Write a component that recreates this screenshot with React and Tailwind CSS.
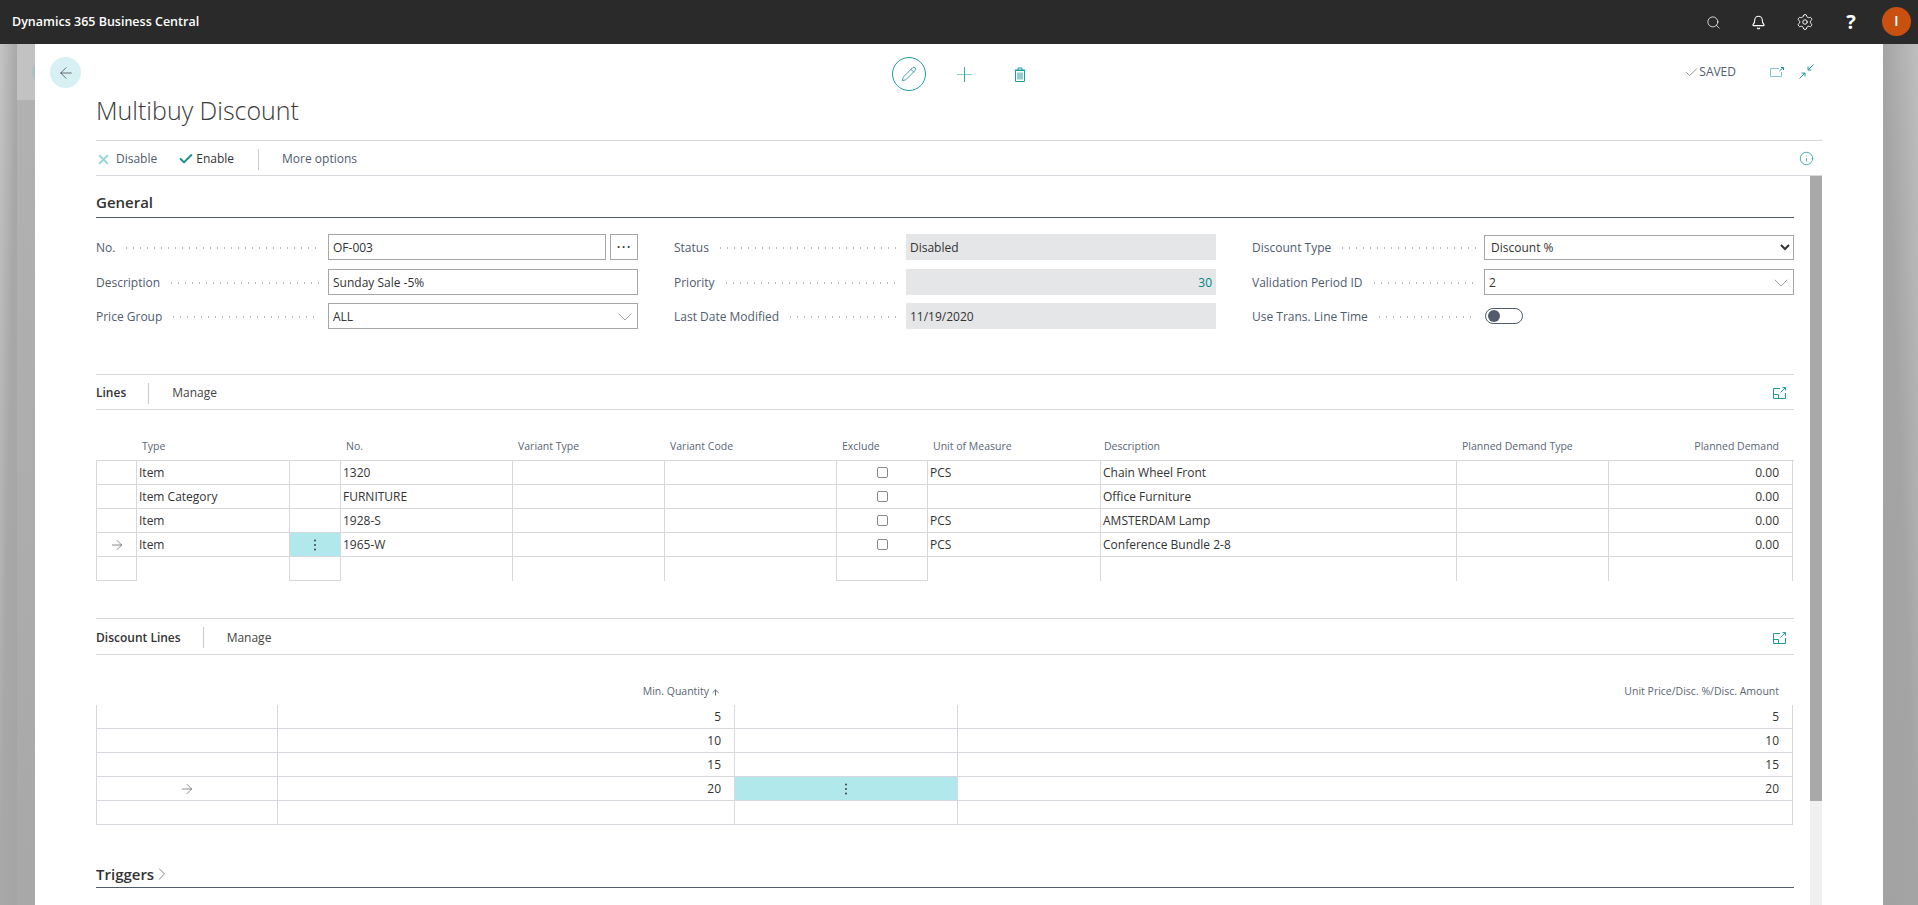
import { ArrowLeft, ArrowRight, ArrowUp, Bell, Check, ChevronDown, ChevronRight, Info, Pencil, Search, Settings, X } from 'lucide-react';

const lineCols = 'grid grid-cols-[40px_153px_51px_172px_152px_172px_91px_173px_356px_152px_185px]';
const discountCols = 'grid grid-cols-[181px_457px_223px_836px]';

const lines = [
  { type: 'Item', no: '1320', uom: 'PCS', desc: 'Chain Wheel Front' },
  { type: 'Item Category', no: 'FURNITURE', uom: '', desc: 'Office Furniture' },
  { type: 'Item', no: '1928-S', uom: 'PCS', desc: 'AMSTERDAM Lamp' },
  { type: 'Item', no: '1965-W', uom: 'PCS', desc: 'Conference Bundle 2-8', current: true },
];

const discounts = [
  { qty: '5', value: '5' },
  { qty: '10', value: '10' },
  { qty: '15', value: '15' },
  { qty: '20', value: '20', current: true },
];

function Kebab() {
  return (
    <svg width="4" height="12" viewBox="0 0 4 12" className="text-[#333]">
      <circle cx="2" cy="1.5" r="0.9" fill="currentColor" />
      <circle cx="2" cy="6" r="0.9" fill="currentColor" />
      <circle cx="2" cy="10.5" r="0.9" fill="currentColor" />
    </svg>
  );
}

function PlusIcon() {
  return (
    <svg width="15" height="15" viewBox="0 0 15 15" fill="none" strokeWidth="1">
      <path d="M0 7.5h15" stroke="#85ccd0" />
      <path d="M7.5 0v15" stroke="#3aa6ab" />
    </svg>
  );
}

function TrashIcon() {
  return (
    <svg width="12" height="15" viewBox="0 0 12 15" fill="none" stroke="#1f9aa0" strokeWidth="1">
      <path d="M0.5 3h11M4 3V1h4v2" />
      <path d="M1.5 3.5h9V14.5h-9z" />
      <path d="M4 5.5v7M6 5.5v7M8 5.5v7" />
    </svg>
  );
}

function OpenIcon() {
  return (
    <svg width="14" height="10" viewBox="0 0 14 10" fill="none" strokeWidth="1">
      <path d="M9 1.5H0.5v8h11V5" stroke="#7cc8cc" />
      <path d="M9.5 4L13 0.7M11 0.5h2.5V3" stroke="#1f8d93" />
    </svg>
  );
}

function CollapseIcon() {
  return (
    <svg width="15" height="15" viewBox="0 0 15 15" fill="none" stroke="#1f9aa0" strokeWidth="1">
      <path d="M14.5 0.5L9 6M9 2.5V6h3.5" />
      <path d="M0.5 14.5L6 9M2.5 9H6v3.5" />
    </svg>
  );
}

function ExpandListIcon() {
  return (
    <svg width="13" height="12" viewBox="0 0 13 12" fill="none" stroke="#1f9aa0" strokeWidth="1">
      <path d="M7 1.5H0.5v10h12V6" />
      <path d="M0.5 7.5h5v4" />
      <path d="M7.5 5.5L12 1M9.5 0.5h3V3.5" />
    </svg>
  );
}

function Field({ label, children }) {
  return (
    <div className="flex items-center h-[26px]">
      <div className="flex items-center w-[232px] pr-2 pt-0.5">
        <span className="text-xs text-[#505c6d] whitespace-nowrap">{label}</span>
        <span className="flex-1 ml-2 h-1 bg-[radial-gradient(circle,#b4b9c0_0.7px,transparent_1px)] bg-[length:7px_4px] bg-repeat-x" />
      </div>
      <div className="flex-1 h-full">{children}</div>
    </div>
  );
}

function TextBox({ children, className = '' }) {
  return (
    <div className={`h-full flex items-center px-1 pt-0.5 border border-[#a6a6a6] text-xs text-[#333] ${className}`}>
      {children}
    </div>
  );
}

function ReadOnlyBox({ children, right }) {
  return (
    <div className={`h-full flex items-center px-1 pt-0.5 bg-[#e5e6e8] text-xs ${right ? 'justify-end text-[#00838a]' : 'text-[#333]'}`}>
      {children}
    </div>
  );
}

function LookupBox({ children }) {
  return (
    <TextBox className="justify-between pr-0">
      {children}
      <ChevronDown size={24} strokeWidth={0.7} className="text-[#777] -my-1" />
    </TextBox>
  );
}

function PartHeader({ title, height }) {
  return (
    <div className={`flex items-center pt-0.5 border-y border-[#d5d8dd] ${height}`}>
      <span className="text-xs font-semibold text-[#333]">{title}</span>
      <span className="w-px h-[21px] bg-[#c8ccd1] ml-[22px] mr-[23px]" />
      <span className="flex-1 text-xs text-[#444]">Manage</span>
      <span className="mr-2"><ExpandListIcon /></span>
    </div>
  );
}

function Cell({ children, className = '', first, last, noBottom, right, active }) {
  return (
    <div
      className={`h-6 flex items-center border-l border-[#d5d8dd] px-0.5 text-xs text-[#333] whitespace-nowrap
        ${noBottom ? '' : 'border-b'} ${right ? 'justify-end pr-[13px]' : ''} ${last ? 'border-r' : ''} ${active ? 'bg-[#b0e8ec] justify-center' : ''} ${first ? 'justify-center' : ''} ${className}`}
    >
      {children}
    </div>
  );
}

function CheckBox() {
  return <span className="w-[11px] h-[11px] rounded-[2px] border border-[#8a8a8a]" />;
}

function LinesTable() {
  return (
    <div>
      <div className={`${lineCols} h-[50px] items-end pb-[5px] text-[10.5px] text-[#5a6675]`}>
        <span />
        <span className="pl-1.5">Type</span>
        <span />
        <span className="pl-1.5">No.</span>
        <span className="pl-1.5">Variant Type</span>
        <span className="pl-1.5">Variant Code</span>
        <span className="pl-1.5">Exclude</span>
        <span className="pl-1.5">Unit of Measure</span>
        <span className="pl-1">Description</span>
        <span className="pl-1.5">Planned Demand Type</span>
        <span className="text-right pr-[14px]">Planned Demand</span>
      </div>
      <div className="border-t border-[#d5d8dd]">
        {lines.map((l) => (
          <div key={l.no} className={lineCols}>
            <Cell first>{l.current && <ArrowRight size={16} strokeWidth={1} className="text-[#555]" />}</Cell>
            <Cell>{l.type}</Cell>
            <Cell active={l.current}>{l.current && <Kebab />}</Cell>
            <Cell>{l.no}</Cell>
            <Cell />
            <Cell />
            <Cell className="justify-center"><CheckBox /></Cell>
            <Cell>{l.uom}</Cell>
            <Cell>{l.desc}</Cell>
            <Cell />
            <Cell right last>0.00</Cell>
          </div>
        ))}
        <div className={lineCols}>
          <Cell />
          <Cell noBottom />
          <Cell />
          <Cell noBottom />
          <Cell noBottom />
          <Cell noBottom />
          <Cell />
          <Cell noBottom />
          <Cell noBottom />
          <Cell noBottom />
          <Cell noBottom last />
        </div>
      </div>
    </div>
  );
}

function DiscountTable() {
  return (
    <div>
      <div className={`${discountCols} h-[50px] items-end pb-[5px] text-[10.5px] text-[#5a6675]`}>
        <span />
        <span className="flex items-center justify-end pr-[14px]">Min. Quantity<ArrowUp size={9} strokeWidth={2.5} className="ml-0.5" /></span>
        <span />
        <span className="text-right pr-[14px]">Unit Price/Disc. %/Disc. Amount</span>
      </div>
      {discounts.map((d) => (
        <div key={d.qty} className={discountCols}>
          <Cell first>{d.current && <ArrowRight size={16} strokeWidth={1} className="text-[#555]" />}</Cell>
          <Cell right>{d.qty}</Cell>
          <Cell active={d.current}>{d.current && <Kebab />}</Cell>
          <Cell right last>{d.value}</Cell>
        </div>
      ))}
      <div className={discountCols}>
        <Cell />
        <Cell />
        <Cell />
        <Cell last />
      </div>
    </div>
  );
}

export default function App() {
  return (
    <div className="h-[905px] flex flex-col overflow-hidden font-['Open_Sans','Noto_Sans',sans-serif]">
      <header className="h-11 shrink-0 bg-[#2a2a2a] flex items-center pl-3 text-white">
        <span className="flex-1 text-[12.5px] font-semibold">Dynamics 365 Business Central</span>
        <Search size={15} strokeWidth={1.25} className="mr-[30px]" />
        <Bell size={15} strokeWidth={1.75} className="mr-[30px]" />
        <Settings size={18} strokeWidth={1.25} className="mr-[31px]" />
        <span className="w-3 text-center text-xl font-bold mr-[25px]">?</span>
        <span className="w-[29px] h-[29px] mr-[7px] mb-0.5 rounded-full bg-[#ca5010] flex items-center justify-center text-sm font-semibold">I</span>
      </header>

      <div className="flex-1 flex min-h-0">
        <div className="w-[35px] shrink-0 flex">
          <div className="w-[17px] bg-gradient-to-br from-[#c4c4c4] via-[#a8a8a8] to-[#a4a4a4]" />
          <div className="w-[18px] flex flex-col bg-gradient-to-b from-[#b2b2b2] to-[#a8a8a8]">
            <div className="relative h-14 overflow-hidden bg-[#c2c2c2]">
              <span className="absolute left-[15px] top-[13px] w-[31px] h-[31px] rounded-full bg-[#a8c0c0]" />
            </div>
          </div>
        </div>

        <main className="flex-1 min-w-0 bg-white flex flex-col">
          <div className="h-24 shrink-0">
            <div className="grid grid-cols-[842px_auto_1fr] items-start pt-[13px] pl-[15px] pr-[69px]">
              <button type="button" className="w-[31px] h-[31px] rounded-full bg-[#d7f0f4] flex items-center justify-center">
                <ArrowLeft size={18} strokeWidth={1} className="text-[#444]" />
              </button>
              <div className="flex items-center">
                <span className="w-[34px] h-[34px] rounded-full border border-[#1f9aa0] flex items-center justify-center">
                  <Pencil size={16} strokeWidth={1.25} className="text-[#1f8d93]" />
                </span>
                <span className="ml-[31px]"><PlusIcon /></span>
                <span className="ml-[42px]"><TrashIcon /></span>
              </div>
              <div className="flex items-center justify-end pt-[7px]">
                <Check size={15} strokeWidth={1} className="text-[#555]" />
                <span className="text-xs text-[#505c6d] font-medium">SAVED</span>
                <span className="ml-[34px]"><OpenIcon /></span>
                <span className="ml-[15px] -mt-0.5"><CollapseIcon /></span>
              </div>
            </div>
            <h1 className="mt-px ml-[61px] text-[25px] leading-9 font-light text-[#3a3a3a]">Multibuy Discount</h1>
          </div>

          <div className="mx-[61px] flex-1 min-h-0 flex flex-col">
            <div className="h-9 shrink-0 flex items-center pt-0.5 border-y border-[#d5d8dd] text-xs text-[#505c6d]">
              <X size={15} strokeWidth={3} className="mr-[5px] text-[#9ad6da]" />
              <span>Disable</span>
              <Check size={16} strokeWidth={3} className="ml-[21px] mr-0.5 text-[#1f8d93]" />
              <span className="text-[#333]">Enable</span>
              <span className="w-px h-[21px] bg-[#c8ccd1] ml-6 mr-[23px]" />
              <span className="flex-1">More options</span>
              <Info size={15} strokeWidth={1.25} className="mr-2 -mt-0.5 text-[#1f9aa0]" />
            </div>

            <div className="flex-1 min-h-0 flex">
              <div className="flex-1 min-w-0 pr-4">
                <h2 className="pt-[14px] pb-[3px] border-b border-[#505c6d] text-[15px] leading-6 font-semibold text-[#333]">General</h2>

                <div className="grid grid-cols-3 gap-x-9 gap-y-[8.5px] mt-4">
                  <Field label="No.">
                    <div className="flex gap-1 h-full">
                      <TextBox className="flex-1">OF-003</TextBox>
                      <span className="w-7 border border-[#a6a6a6] flex items-center justify-center text-[#333] tracking-wider">···</span>
                    </div>
                  </Field>
                  <Field label="Status"><ReadOnlyBox>Disabled</ReadOnlyBox></Field>
                  <Field label="Discount Type">
                    <select defaultValue="d" className="w-full h-[25px] pl-0.5 border border-[#a6a6a6] text-xs text-[#333] bg-white">
                      <option value="d">Discount %</option>
                    </select>
                  </Field>
                  <Field label="Description"><TextBox>Sunday Sale -5%</TextBox></Field>
                  <Field label="Priority"><ReadOnlyBox right>30</ReadOnlyBox></Field>
                  <Field label="Validation Period ID"><LookupBox>2</LookupBox></Field>
                  <Field label="Price Group"><LookupBox>ALL</LookupBox></Field>
                  <Field label="Last Date Modified"><ReadOnlyBox>11/19/2020</ReadOnlyBox></Field>
                  <Field label="Use Trans. Line Time">
                    <div className="h-full flex items-center pl-px">
                      <span className="w-[38px] h-4 rounded-full border border-[#505c6d] flex items-center pl-0.5">
                        <span className="w-3 h-3 rounded-full bg-[#505c6d]" />
                      </span>
                    </div>
                  </Field>
                </div>

                <div className="mt-[45px]">
                  <PartHeader title="Lines" height="h-9" />
                  <LinesTable />
                </div>

                <div className="mt-[37px]">
                  <PartHeader title="Discount Lines" height="h-[37px]" />
                  <DiscountTable />
                </div>

                <h2 className="mt-[37px] pb-px border-b border-[#505c6d] flex items-center text-[15px] leading-6 font-semibold text-[#333]">
                  Triggers
                  <ChevronRight size={20} strokeWidth={0.8} className="-ml-0.5 text-[#444]" />
                </h2>
              </div>

              <div className="w-3 shrink-0 bg-[#f0f0f0]">
                <div className="h-[625px] bg-[#a9a9a9]" />
              </div>
            </div>
          </div>
        </main>

        <div className="w-[35px] shrink-0 bg-gradient-to-bl from-[#bebebe] via-[#a4a4a4] to-[#a2a2a2]" />
      </div>
    </div>
  );
}
